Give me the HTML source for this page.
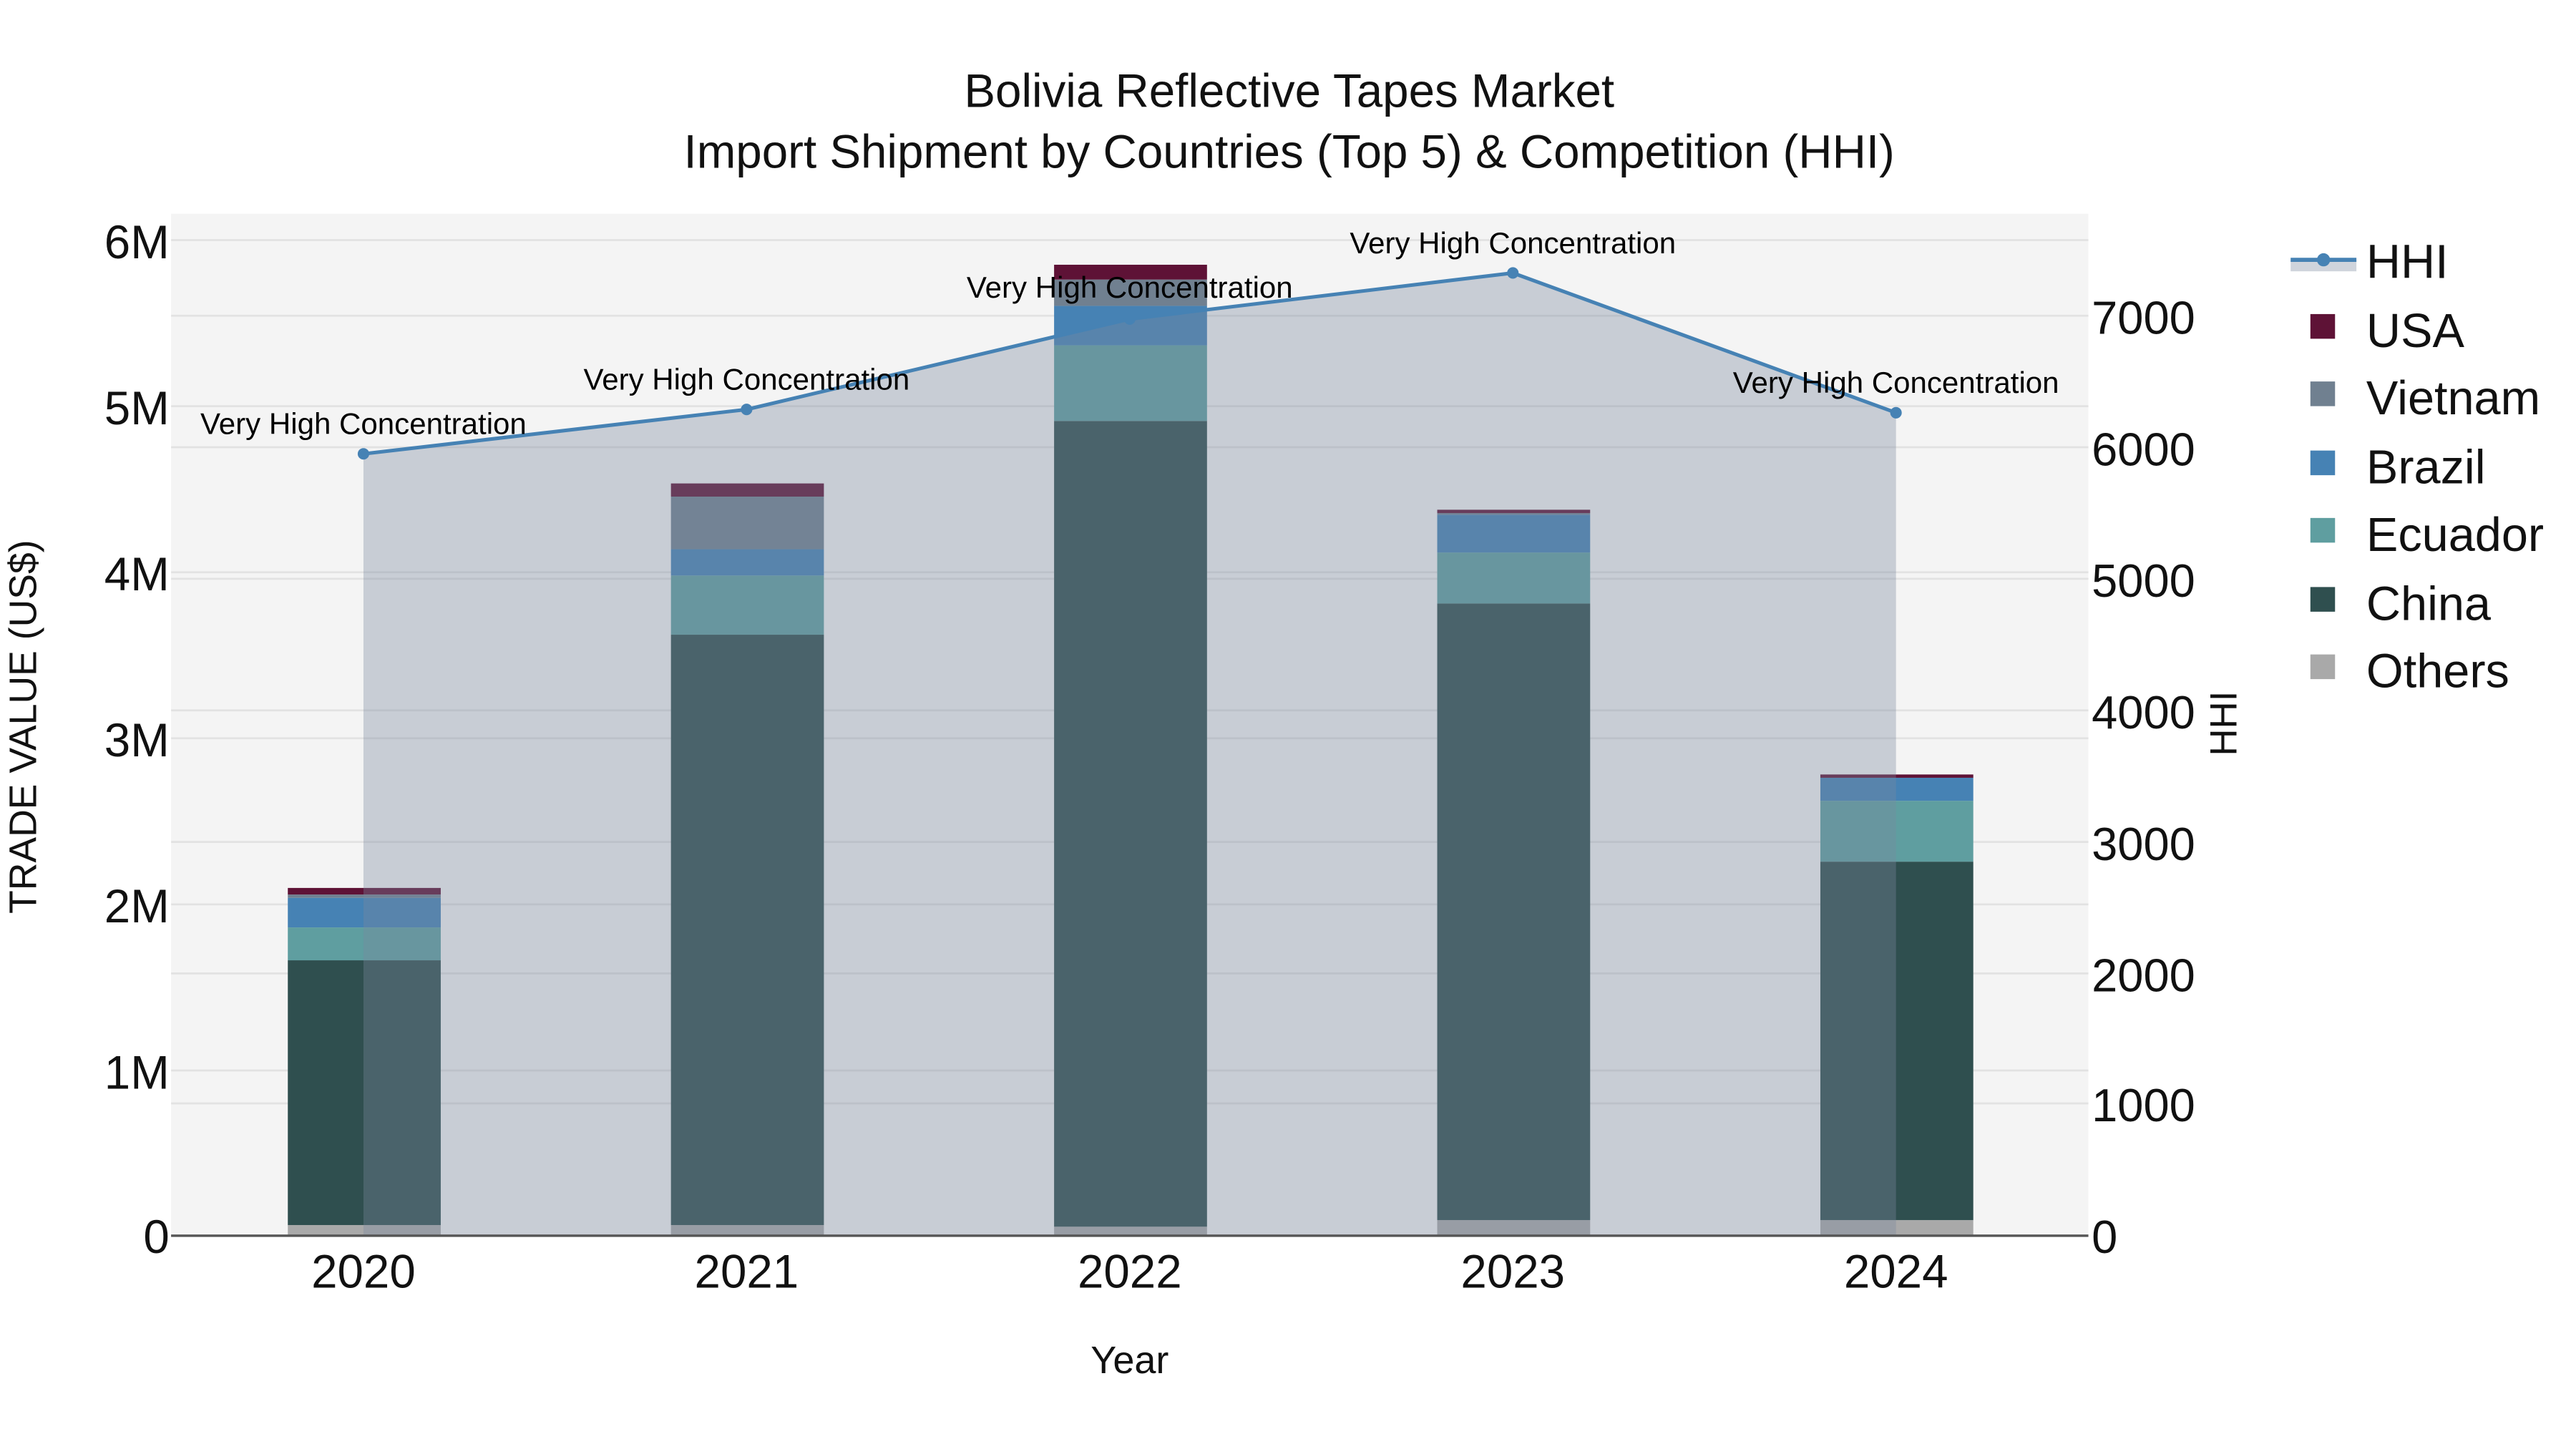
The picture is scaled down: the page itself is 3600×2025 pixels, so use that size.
<!DOCTYPE html>
<html><head><meta charset="utf-8"><style>html,body{margin:0;padding:0;background:#fff}svg{display:block}</style></head>
<body>
<svg width="3600" height="2025" viewBox="0 0 1566.5 881.2" xmlns="http://www.w3.org/2000/svg" font-family="Liberation Sans, sans-serif">
<rect width="1570" height="885" fill="#fff"/>
<rect x="104" y="130" width="1166" height="622" fill="#f4f4f4"/>
<g stroke="#e2e2e2" stroke-width="1.2">
<line x1="104" x2="1270" y1="146" y2="146"/><line x1="104" x2="1270" y1="247" y2="247"/><line x1="104" x2="1270" y1="348" y2="348"/><line x1="104" x2="1270" y1="449" y2="449"/><line x1="104" x2="1270" y1="550" y2="550"/><line x1="104" x2="1270" y1="651" y2="651"/>
<line x1="104" x2="1270" y1="192" y2="192"/><line x1="104" x2="1270" y1="272" y2="272"/><line x1="104" x2="1270" y1="352" y2="352"/><line x1="104" x2="1270" y1="432" y2="432"/><line x1="104" x2="1270" y1="512" y2="512"/><line x1="104" x2="1270" y1="592" y2="592"/><line x1="104" x2="1270" y1="671" y2="671"/>
</g>
<g>
<rect x="175" y="745" width="93" height="7" fill="#a9a9a9"/><rect x="175" y="584" width="93" height="161" fill="#2f4f4f"/><rect x="175" y="564" width="93" height="20" fill="#5f9ea0"/><rect x="175" y="546" width="93" height="18" fill="#4682b4"/><rect x="175" y="544" width="93" height="2" fill="#708090"/><rect x="175" y="540" width="93" height="4" fill="#5e1236"/>
<rect x="408" y="745" width="93" height="7" fill="#a9a9a9"/><rect x="408" y="386" width="93" height="359" fill="#2f4f4f"/><rect x="408" y="350" width="93" height="36" fill="#5f9ea0"/><rect x="408" y="334" width="93" height="16" fill="#4682b4"/><rect x="408" y="302" width="93" height="32" fill="#708090"/><rect x="408" y="294" width="93" height="8" fill="#5e1236"/>
<rect x="641" y="746" width="93" height="6" fill="#a9a9a9"/><rect x="641" y="256" width="93" height="490" fill="#2f4f4f"/><rect x="641" y="210" width="93" height="46" fill="#5f9ea0"/><rect x="641" y="186" width="93" height="24" fill="#4682b4"/><rect x="641" y="170" width="93" height="16" fill="#708090"/><rect x="641" y="161" width="93" height="9" fill="#5e1236"/>
<rect x="874" y="742" width="93" height="10" fill="#a9a9a9"/><rect x="874" y="367" width="93" height="375" fill="#2f4f4f"/><rect x="874" y="336" width="93" height="31" fill="#5f9ea0"/><rect x="874" y="313" width="93" height="23" fill="#4682b4"/><rect x="874" y="312" width="93" height="1" fill="#708090"/><rect x="874" y="310" width="93" height="2" fill="#5e1236"/>
<rect x="1107" y="742" width="93" height="10" fill="#a9a9a9"/><rect x="1107" y="524" width="93" height="218" fill="#2f4f4f"/><rect x="1107" y="487" width="93" height="37" fill="#5f9ea0"/><rect x="1107" y="473" width="93" height="14" fill="#4682b4"/><rect x="1107" y="471" width="93" height="2" fill="#5e1236"/>
</g>
<polygon points="221,276 454,249 687,194 920,166 1153,251 1153,752 221,752" fill="rgb(122,135,158)" fill-opacity="0.36"/>
<polyline points="221,276 454,249 687,194 920,166 1153,251" fill="none" stroke="#4682b4" stroke-width="2.2"/>
<g fill="#4682b4"><circle cx="221" cy="276" r="3.5"/><circle cx="454" cy="249" r="3.5"/><circle cx="687" cy="194" r="3.5"/><circle cx="920" cy="166" r="3.5"/><circle cx="1153" cy="251" r="3.5"/></g>
<line x1="104" x2="1270" y1="751.5" y2="751.5" stroke="#555" stroke-width="1.5"/>
<g font-size="18.3" fill="#000" text-anchor="middle">
<text x="221" y="264">Very High Concentration</text><text x="454" y="237">Very High Concentration</text><text x="687" y="181">Very High Concentration</text><text x="920" y="154">Very High Concentration</text><text x="1153" y="239">Very High Concentration</text>
</g>
<g font-size="28.5" fill="#111" text-anchor="end">
<text x="103" y="157">6M</text><text x="103" y="258">5M</text><text x="103" y="359">4M</text><text x="103" y="460">3M</text><text x="103" y="561">2M</text><text x="103" y="662">1M</text><text x="103" y="762">0</text>
</g>
<g font-size="28.3" fill="#111" text-anchor="start">
<text x="1272" y="203">7000</text><text x="1272" y="283">6000</text><text x="1272" y="363">5000</text><text x="1272" y="443">4000</text><text x="1272" y="523">3000</text><text x="1272" y="603">2000</text><text x="1272" y="682">1000</text><text x="1272" y="762">0</text>
</g>
<g font-size="28.5" fill="#111" text-anchor="middle">
<text x="221" y="783">2020</text><text x="454" y="783">2021</text><text x="687" y="783">2022</text><text x="920" y="783">2023</text><text x="1153" y="783">2024</text>
</g>
<g font-size="28.5" fill="#111" text-anchor="middle">
<text x="784" y="65">Bolivia Reflective Tapes Market</text>
<text x="784" y="102">Import Shipment by Countries (Top 5) &amp; Competition (HHI)</text>
</g>
<text x="687" y="835" font-size="23.5" fill="#111" text-anchor="middle">Year</text>
<text transform="translate(22,442) rotate(-90)" font-size="23.3" fill="#111" text-anchor="middle">TRADE VALUE (US$)</text>
<text transform="translate(1360,440) rotate(-90)" font-size="23" fill="#111" text-anchor="middle">HHI</text>
<rect x="1393" y="158" width="40" height="7" fill="rgb(122,135,158)" fill-opacity="0.36"/>
<line x1="1393" x2="1433" y1="158" y2="158" stroke="#4682b4" stroke-width="2.5"/>
<circle cx="1413" cy="158" r="4" fill="#4682b4"/>
<g font-size="29" fill="#111">
<text x="1439" y="169">HHI</text>
<rect x="1405" y="191" width="15" height="15" fill="#5e1236"/><text x="1439" y="211">USA</text>
<rect x="1405" y="232" width="15" height="15" fill="#708090"/><text x="1439" y="252">Vietnam</text>
<rect x="1405" y="274" width="15" height="15" fill="#4682b4"/><text x="1439" y="294">Brazil</text>
<rect x="1405" y="315" width="15" height="15" fill="#5f9ea0"/><text x="1439" y="335">Ecuador</text>
<rect x="1405" y="357" width="15" height="15" fill="#2f4f4f"/><text x="1439" y="377">China</text>
<rect x="1405" y="398" width="15" height="15" fill="#a9a9a9"/><text x="1439" y="418">Others</text>
</g>
</svg>
</body></html>
